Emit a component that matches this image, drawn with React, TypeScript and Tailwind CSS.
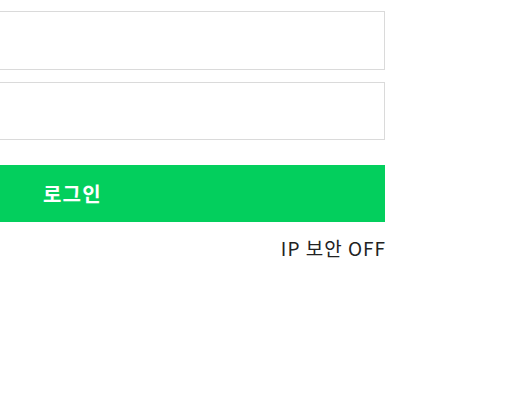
import React from 'react';

export default function App() {
  return (
    <div className="w-[511px] h-[402px] bg-white overflow-hidden" style={{ fontFamily: '"Noto Sans CJK KR", "Noto Sans", sans-serif' }}>
      <div className="ml-[-40px] w-[425px] pt-[11px] flex flex-col">
        <input
          type="text"
          className="h-[59px] w-full border border-[#dadada] bg-white outline-none"
        />
        <input
          type="password"
          className="mt-[12px] h-[58px] w-full border border-[#dadada] bg-white outline-none"
        />
        <button className="mt-[25px] h-[57px] w-full bg-[#03cf5d] text-left pl-[83px] text-white text-[20px] font-bold tracking-[1.2px]">
          로그인
        </button>
        <div className="mt-[14px] -mr-[1px] text-right text-[19px] leading-[24px] text-[#222] tracking-[1px]">
          IP 보안 OFF
        </div>
      </div>
    </div>
  );
}
